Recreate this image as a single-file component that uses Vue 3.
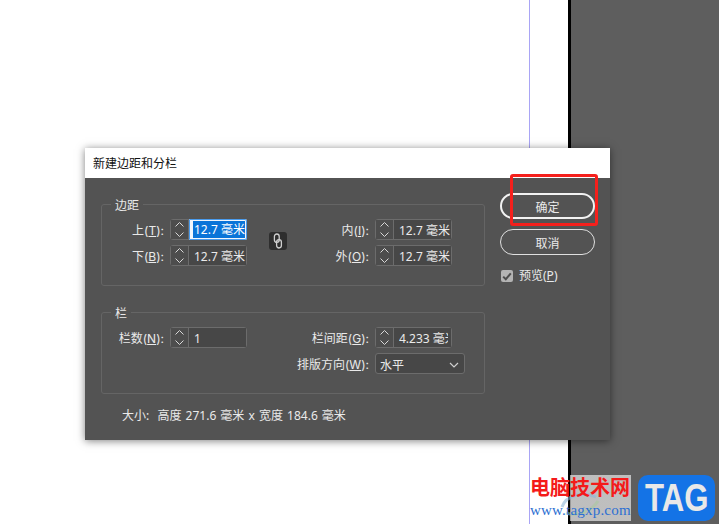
<script setup>
const spin = 'M4.5 6.5 L8.5 2.5 L12.5 6.5'
const spinDown = 'M4.5 12.5 L8.5 16.5 L12.5 12.5'
</script>

<template>
  <div class="page">
    <div class="doc"></div>
    <div class="doc-margin"></div>
    <div class="paste"></div>

    <div class="dialog">
      <div class="title">新建边距和分栏</div>
      <div class="body">
        <div class="left">
          <div class="group">
            <span class="legend">边距</span>
            <div class="grid">
              <label class="lbl">上(<u>T</u>):</label>
              <div class="field">
                <span class="spin"><svg width="17" height="19" viewBox="0 0 17 19"><path :d="spin" /><path :d="spinDown" /></svg></span>
                <span class="val focus"><span class="sel">12.7 毫米</span></span>
              </div>
              <div class="link">
                <svg width="10" height="16" viewBox="0 0 10 16">
                  <rect x="1.4" y="1" width="4.8" height="8.4" rx="2.4" />
                  <rect x="3.6" y="6.6" width="4.8" height="8.4" rx="2.4" />
                </svg>
              </div>
              <label class="lbl col4">内(<u>I</u>):</label>
              <div class="field">
                <span class="spin"><svg width="17" height="19" viewBox="0 0 17 19"><path :d="spin" /><path :d="spinDown" /></svg></span>
                <span class="val">12.7 毫米</span>
              </div>

              <label class="lbl">下(<u>B</u>):</label>
              <div class="field">
                <span class="spin"><svg width="17" height="19" viewBox="0 0 17 19"><path :d="spin" /><path :d="spinDown" /></svg></span>
                <span class="val">12.7 毫米</span>
              </div>
              <label class="lbl col4">外(<u>O</u>):</label>
              <div class="field">
                <span class="spin"><svg width="17" height="19" viewBox="0 0 17 19"><path :d="spin" /><path :d="spinDown" /></svg></span>
                <span class="val">12.7 毫米</span>
              </div>
            </div>
          </div>

          <div class="group">
            <span class="legend">栏</span>
            <div class="grid">
              <label class="lbl">栏数(<u>N</u>):</label>
              <div class="field">
                <span class="spin"><svg width="17" height="19" viewBox="0 0 17 19"><path :d="spin" /><path :d="spinDown" /></svg></span>
                <span class="val">1</span>
              </div>
              <label class="lbl col4">栏间距(<u>G</u>):</label>
              <div class="field">
                <span class="spin"><svg width="17" height="19" viewBox="0 0 17 19"><path :d="spin" /><path :d="spinDown" /></svg></span>
                <span class="val clip"><span class="clip-in">4.233 毫米</span></span>
              </div>
              <label class="lbl wide">排版方向(<u>W</u>):</label>
              <div class="select">
                <span>水平</span>
                <svg width="10" height="6" viewBox="0 0 10 6"><path d="M1 1 L5 5 L9 1" /></svg>
              </div>
            </div>
          </div>

          <div class="size">大小:&nbsp; 高度 271.6 毫米 x 宽度 184.6 毫米</div>
        </div>

        <div class="right">
          <div class="btn primary">确定</div>
          <div class="btn">取消</div>
          <div class="check">
            <span class="box">
              <svg width="10" height="9" viewBox="0 0 10 9"><path d="M1.2 4.6 L3.8 7.2 L8.8 1.4" /></svg>
            </span>
            <span>预览(<u>P</u>)</span>
          </div>
        </div>
      </div>
    </div>

    <div class="redbox"></div>

    <div class="mark">
      <div class="mark-text">
        <svg class="swirl" width="44" height="30" viewBox="0 0 44 30">
          <path d="M4 18 C8 6 26 2 38 8" stroke="#8fb7d8" />
          <path d="M8 24 C20 28 34 22 40 12" stroke="#a9c9a0" />
        </svg>
        <div class="mark-cn">电脑技术网</div>
        <div class="mark-url">www.tagxp.com</div>
      </div>
      <div class="mark-tag"><span>TAG</span></div>
    </div>
  </div>
</template>

<style scoped>
.page {
  position: relative;
  display: flex;
  width: 719px;
  height: 524px;
  overflow: hidden;
  background: #fff;
  font-family: "Noto Sans", "Noto Sans CJK SC", sans-serif;
  font-size: 12px;
  color: #eaeaea;
}

.doc {
  width: 529px;
  border-right: 1px solid #a9a5f5;
}

.doc-margin {
  width: 38px;
  border-right: 3px solid #000;
}

.paste {
  flex: 1;
  background: #5e5e5e;
}

.dialog {
  position: absolute;
  left: 85px;
  top: 148px;
  width: 525px;
  height: 292px;
  display: flex;
  flex-direction: column;
  box-shadow: 0 1px 8px rgba(0, 0, 0, 0.5);
}

.title {
  height: 30px;
  line-height: 31px;
  padding-left: 8px;
  background: #fff;
  color: #111;
}

.body {
  flex: 1;
  display: flex;
  padding: 26px 15px 0 16px;
  background: #535353;
}

.left {
  width: 384px;
  display: flex;
  flex-direction: column;
  gap: 26px;
}

.group {
  position: relative;
  height: 82px;
  padding: 14px 0 0;
  box-sizing: border-box;
  border: 1px solid #656565;
  border-radius: 3px;
}

.legend {
  position: absolute;
  left: 9px;
  top: -8px;
  padding: 0 4px;
  line-height: 17px;
  background: #535353;
}

.grid {
  display: grid;
  grid-template-columns: 68px 77px 22px 18px 88px auto;
  grid-template-rows: 21px 21px;
  row-gap: 5px;
  justify-content: start;
}

.lbl {
  grid-column: 1;
  text-align: right;
  padding-right: 6px;
  font-family: Inter, "Noto Sans CJK SC", sans-serif;
  line-height: 23px;
  white-space: nowrap;
}

.lbl.col4 {
  grid-column: 5;
}

.lbl.wide {
  grid-column: 1 / 6;
  grid-row: 2;
}

.field {
  display: flex;
  width: 77px;
  height: 21px;
  box-sizing: border-box;
  border: 1px solid #6c6c6c;
  border-radius: 3px;
}

.spin {
  width: 17px;
  flex: none;
  border-right: 1px solid #6c6c6c;
  background: #4d4d4d;
  display: flex;
  align-items: center;
}

.spin path {
  fill: none;
  stroke: #d8d8d8;
  stroke-width: 1;
}

.val {
  flex: 1;
  min-width: 0;
  padding-left: 5px;
  line-height: 22px;
  background: #474747;
  white-space: nowrap;
  overflow: hidden;
}

.val.clip {
  padding-right: 3px;
}

.clip-in {
  display: block;
  overflow: hidden;
}

.val.focus {
  margin: -1px -1px -1px 0;
  padding: 2px 2px 2px 4px;
  border-radius: 0 2px 2px 0;
  outline: 1px solid #4a9bec;
  outline-offset: -1px;
  background: #f1f6fc;
}

.sel {
  display: block;
  height: 17px;
  padding-left: 1px;
  line-height: 18px;
  background: #0a74d8;
  color: #fff;
  overflow: hidden;
}

.link {
  grid-column: 4;
  grid-row: 1 / 3;
  align-self: center;
  width: 18px;
  height: 18px;
  margin-bottom: 3px;
  border-radius: 3px;
  background: #2e2e2e;
  display: flex;
  align-items: center;
  justify-content: center;
}

.link rect {
  fill: none;
  stroke: #cfcfcf;
  stroke-width: 1.3;
}

.select {
  display: flex;
  align-items: center;
  justify-content: space-between;
  width: 90px;
  height: 21px;
  padding: 2px 5px 0 4px;
  box-sizing: border-box;
  border: 1px solid #6c6c6c;
  border-radius: 3px;
  background: #474747;
}

.select path {
  fill: none;
  stroke: #d0d0d0;
  stroke-width: 1.2;
}

.size {
  margin-top: -13px;
  padding-left: 21px;
  line-height: 18px;
  word-spacing: 1px;
}

.right {
  width: 95px;
  margin-left: 15px;
  margin-top: -11px;
  display: flex;
  flex-direction: column;
  gap: 10px;
}

.btn {
  height: 26px;
  box-sizing: border-box;
  padding-top: 2px;
  border: 1px solid #e0e0e0;
  border-radius: 13px;
  line-height: 24px;
  text-align: center;
}

.btn.primary {
  border: 2px solid #f2f2f2;
  line-height: 22px;
}

.check {
  display: flex;
  align-items: center;
  gap: 6px;
  margin-top: 2px;
  margin-left: 1px;
  line-height: 18px;
}

.box {
  width: 12px;
  height: 12px;
  border-radius: 2px;
  background: #b3b3b3;
  display: flex;
  align-items: center;
  justify-content: center;
}

.box path {
  fill: none;
  stroke: #4c4c4c;
  stroke-width: 2;
}

.redbox {
  position: absolute;
  left: 510px;
  top: 174px;
  width: 88px;
  height: 52px;
  box-sizing: border-box;
  border: 3px solid #f5201c;
  border-radius: 3px;
}

.mark {
  position: absolute;
  left: 530px;
  top: 475px;
  display: flex;
  gap: 7px;
}

.mark-text {
  position: relative;
  width: 101px;
  height: 46px;
  background: linear-gradient(90deg, transparent 39.5%, rgba(255, 255, 255, 0.6) 39.5%);
}

.swirl {
  position: absolute;
  left: 28px;
  top: 14px;
  opacity: 0.6;
}

.swirl path {
  fill: none;
  stroke-width: 3;
}

.mark-cn {
  position: relative;
  margin-top: -1px;
  font-family: "Noto Sans CJK SC", sans-serif;
  font-size: 20px;
  font-weight: 700;
  line-height: 26px;
  color: #f41a1a;
}

.mark-url {
  position: relative;
  padding-top: 2px;
  font-family: "Liberation Serif", serif;
  font-size: 15px;
  line-height: 17px;
  letter-spacing: 0.2px;
  color: #2c6fd2;
  white-space: nowrap;
}

.mark-tag {
  width: 77px;
  height: 46px;
  border-radius: 10px;
  background: #1473e6;
  color: #e8e8e8;
  font-family: "Liberation Sans", sans-serif;
  font-size: 38px;
  font-weight: 700;
  line-height: 46px;
  text-align: center;
}

.mark-tag span {
  display: inline-block;
  transform: scaleX(0.82);
}
</style>

<style>
html,
body {
  margin: 0;
  background: #fff;
}
</style>
